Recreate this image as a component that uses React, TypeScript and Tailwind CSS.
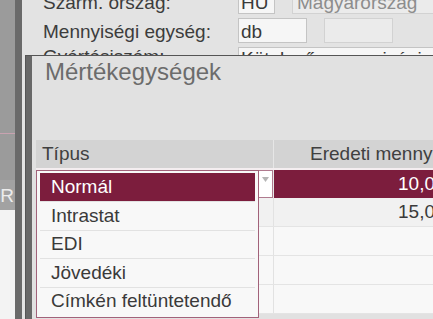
import React from "react";

const font = { fontFamily: '"Liberation Sans", Arial, sans-serif' };

export default function App() {
  const items = ["Normál", "Intrastat", "EDI", "Jövedéki", "Címkén feltüntetendő"];
  return (
    <div className="relative w-[433px] h-[319px] overflow-hidden flex bg-[#e3e3e3]" style={font}>
      {/* left strip */}
      <div className="w-[15px] shrink-0 h-full flex flex-col bg-[#9b9b9b]">
        <div className="h-[133px] shrink-0" />
        <div className="h-px shrink-0 bg-[#c8a2b0]" />
        <div className="h-[46px] shrink-0" />
        <div className="h-[30px] shrink-0 bg-[#a2a2a2] flex items-center justify-end overflow-hidden">
          <span className="text-[19px] leading-none text-[#ececec] mr-[1px]">R</span>
        </div>
        <div className="flex-1 bg-[#f3f3f3]" />
      </div>
      <div className="w-[7px] shrink-0 h-full bg-[#6a6a6a]" />
      {/* background form */}
      <div className="flex-1 min-w-0 h-full pl-[21px] mt-[-11px] flex flex-col gap-[4px]">
        <div className="flex items-center h-[25px] shrink-0">
          <span className="w-[195px] shrink-0 pt-[4px] text-[19px] text-[#3c3c3c] whitespace-nowrap">Szárm. ország:</span>
          <div className="w-[37px] shrink-0 h-[25px] bg-[#f6f6f6] border border-[#c4c4c4] flex items-center pl-[2px] pt-[3px] text-[19px] text-[#3a3a3a]">HU</div>
          <div className="ml-[17px] w-[200px] shrink-0 h-[25px] bg-[#ebebeb] border border-[#d2d2d2] flex items-center pl-[4px] pt-[3px] text-[19px] text-[#8d8d8d] whitespace-nowrap">Magyarország</div>
        </div>
        <div className="flex items-center h-[25px] shrink-0">
          <span className="w-[195px] shrink-0 pt-[4px] text-[19px] text-[#3c3c3c] whitespace-nowrap">Mennyiségi egység:</span>
          <div className="w-[69px] shrink-0 h-[25px] bg-[#f6f6f6] border border-[#c4c4c4] flex items-center pl-[2px] pt-[3px] text-[19px] text-[#3a3a3a]">db</div>
          <div className="ml-[17px] w-[69px] shrink-0 h-[25px] bg-[#ebebeb] border border-[#d2d2d2]" />
        </div>
        <div className="flex items-center h-[25px] shrink-0">
          <span className="w-[195px] shrink-0 mt-[-4px] text-[19px] text-[#3c3c3c] whitespace-nowrap">Gyártásiszám:</span>
          <div className="w-[200px] shrink-0 h-[25px] bg-[#f6f6f6] border border-[#c4c4c4] flex items-start pl-[2px] text-[19px] leading-[22px] text-[#3a3a3a] whitespace-nowrap overflow-hidden">Kötelező_mennyiségi</div>
        </div>
      </div>

      {/* dialog */}
      <div className="absolute left-[25px] top-[55px] w-[420px] h-[270px] flex border-t border-[#555555]">
        <div className="w-px shrink-0 h-full bg-[#555555]" />
        <div className="w-[6px] shrink-0 h-full bg-[#686868]" />
        <div className="flex-1 min-w-0 h-full bg-[#e1e1e1] flex flex-col">
          <div className="h-[84px] shrink-0 pl-[13px] pt-[1px] text-[24px] leading-[30px] text-[#6c6c6c] whitespace-nowrap">Mértékegységek</div>
          <div className="ml-[4px] flex flex-col">
            <div className="flex h-[28px] bg-[#d3d3d3] text-[19px] text-[#404040] items-center">
              <div className="w-[237px] shrink-0 pl-[6px]">Típus</div>
              <div className="w-px shrink-0 h-full bg-[#e6e6e6]" />
              <div className="flex-1 min-w-0 pl-[36px] whitespace-nowrap overflow-hidden">Eredeti mennyiség</div>
            </div>
            <div className="h-[2px] bg-[#f4eef0]" />
            {/* row 1 */}
            <div className="flex h-[28px] text-[19px]">
              <div className="w-[237px] shrink-0 bg-white border border-[#b07a8e] flex justify-end">
                <div className="w-[14px] h-full flex items-start justify-center pt-[6px]">
                  <svg width="7" height="5" viewBox="0 0 7 5"><path d="M0 0 L7 0 L3.5 5 Z" fill="#b5b5b5" /></svg>
                </div>
              </div>
              <div className="w-px shrink-0 bg-[#e6e6e6]" />
              <div className="flex-1 min-w-0 bg-[#7c1d3d] text-white pl-[124px] flex items-center whitespace-nowrap overflow-hidden">10,000</div>
            </div>
            {[
              ["15,000", "bg-[#f1f1f1]"],
              ["", "bg-[#f8f8f8]"],
              ["", "bg-[#f8f8f8]"],
              ["", "bg-[#f8f8f8]"],
            ].map(([v, bg], i) => (
              <div key={i} className={`flex h-[29px] text-[19px] border-b border-[#e4e4e4] ${bg}`}>
                <div className="w-[237px] shrink-0" />
                <div className="w-px shrink-0 bg-[#e2e2e2]" />
                <div className="flex-1 min-w-0 pl-[124px] flex items-center whitespace-nowrap overflow-hidden text-[#3a3a3a]">{v}</div>
              </div>
            ))}
          </div>
        </div>
      </div>

      {/* dropdown list */}
      <div className="absolute left-[36px] top-[170px] w-[223px] h-[148px] border border-[#a2627a] bg-[#f8f8f8] px-[3px] pt-[2px] flex flex-col">
        {items.map((it, i) => (
          <div
            key={it}
            className={`h-[28.4px] shrink-0 flex items-center pl-[11px] text-[19px] whitespace-nowrap ${
              i === 0 ? "bg-[#7c1d3d] text-white" : "text-[#3a3a3a] border-t border-[#e2e2e2]"
            }`}
          >
            {it}
          </div>
        ))}
      </div>
    </div>
  );
}
